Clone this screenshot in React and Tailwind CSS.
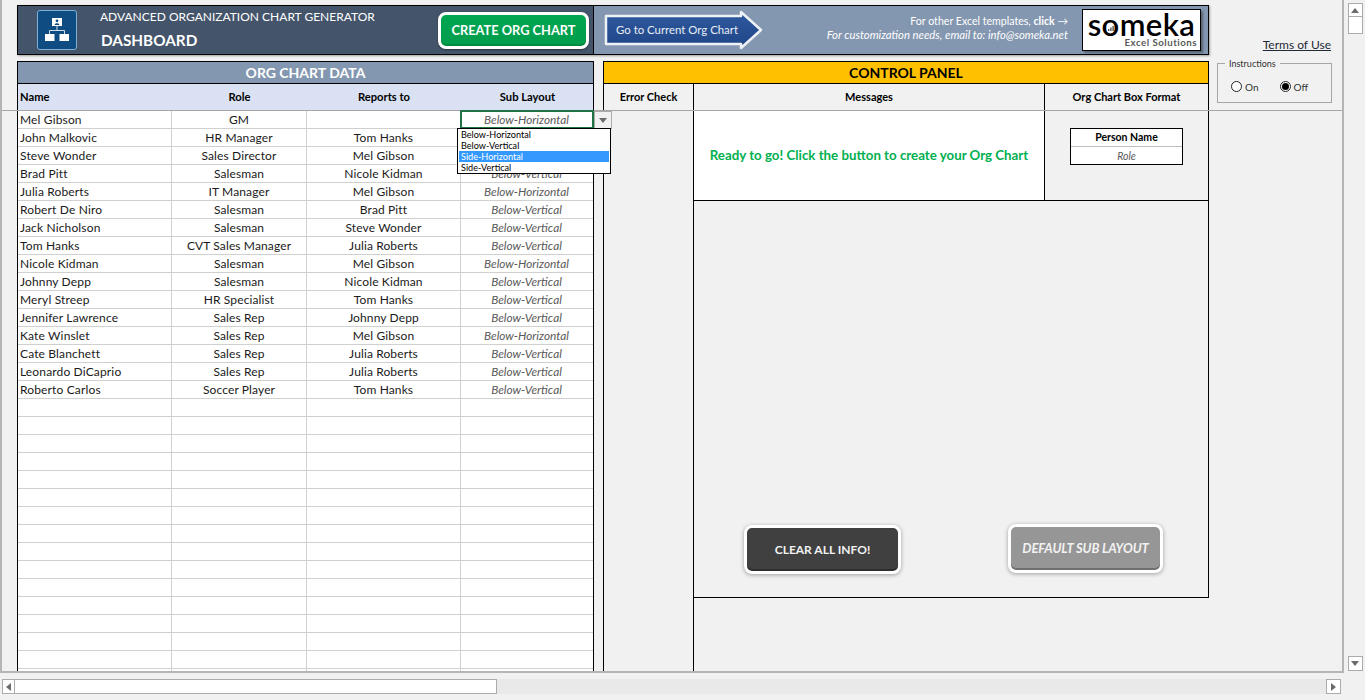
const rows = [
  ["Mel Gibson", "GM", "", "Below-Horizontal"],
  ["John Malkovic", "HR Manager", "Tom Hanks", "Below-Vertical"],
  ["Steve Wonder", "Sales Director", "Mel Gibson", "Below-Vertical"],
  ["Brad Pitt", "Salesman", "Nicole Kidman", "Below-Vertical"],
  ["Julia Roberts", "IT Manager", "Mel Gibson", "Below-Horizontal"],
  ["Robert De Niro", "Salesman", "Brad Pitt", "Below-Vertical"],
  ["Jack Nicholson", "Salesman", "Steve Wonder", "Below-Vertical"],
  ["Tom Hanks", "CVT Sales Manager", "Julia Roberts", "Below-Vertical"],
  ["Nicole Kidman", "Salesman", "Mel Gibson", "Below-Horizontal"],
  ["Johnny Depp", "Salesman", "Nicole Kidman", "Below-Vertical"],
  ["Meryl Streep", "HR Specialist", "Tom Hanks", "Below-Vertical"],
  ["Jennifer Lawrence", "Sales Rep", "Johnny Depp", "Below-Vertical"],
  ["Kate Winslet", "Sales Rep", "Mel Gibson", "Below-Horizontal"],
  ["Cate Blanchett", "Sales Rep", "Julia Roberts", "Below-Vertical"],
  ["Leonardo DiCaprio", "Sales Rep", "Julia Roberts", "Below-Vertical"],
  ["Roberto Carlos", "Soccer Player", "Tom Hanks", "Below-Vertical"],
  ...Array.from({ length: 16 }, () => ["", "", "", ""]),
];

const cols = "grid grid-cols-[154px_135px_154px_133px]";

function Tri({ dir }) {
  const pts = { up: "0,5 4,0 8,5", down: "0,0 8,0 4,5", left: "5,0 5,8 0,4", right: "0,0 0,8 5,4" }[dir];
  const box = dir === "up" || dir === "down" ? "0 0 8 5" : "0 0 5 8";
  const size = dir === "up" || dir === "down" ? "w-2 h-[5px]" : "w-[5px] h-2";
  return (
    <svg viewBox={box} className={size}>
      <polygon points={pts} fill="#6b6b6b" />
    </svg>
  );
}

function ScrollBtn({ dir, className }) {
  return (
    <div className={"flex items-center justify-center bg-white border border-[#ababab] " + className}>
      <Tri dir={dir} />
    </div>
  );
}

function Radio({ checked, label }) {
  return (
    <div className="flex items-center gap-[3px]">
      <span className="flex items-center justify-center w-[11px] h-[11px] rounded-full border border-[#222] bg-white">
        {checked && <span className="w-[7px] h-[7px] rounded-full bg-black" />}
      </span>
      <span className="text-[10px] leading-none text-[#333]">{label}</span>
    </div>
  );
}

function OrgIcon() {
  return (
    <div className="flex items-center justify-center w-10 h-10 ml-[19px] rounded-[3px] bg-[#0f4c81] border border-[#7fb0d6]">
      <svg viewBox="0 0 30 30" className="w-[30px] h-[30px]">
        <rect x="10" y="3" width="10" height="8" fill="#fff" />
        <circle cx="15" cy="5.8" r="1.4" fill="#0f4c81" />
        <path d="M12.6 10 C12.6 7.8 17.4 7.8 17.4 10 Z" fill="#0f4c81" />
        <path d="M15 11 V15.5 M7.5 19 V15.5 H22.5 V19" stroke="#fff" strokeWidth="0.8" fill="none" />
        <rect x="3" y="19" width="9.5" height="7" fill="#fff" />
        <rect x="17.5" y="19" width="9.5" height="7" fill="#fff" />
      </svg>
    </div>
  );
}

function Logo() {
  return (
    <div className="relative flex flex-col items-center w-[119px] h-[42px] ml-[14px] bg-white border border-black shadow-[2px_2px_2px_rgba(0,0,0,0.35)]">
      <span className="font-semibold text-[31px] leading-[24px] mt-[2px] text-black tracking-[0.4px]">someka</span>
      <span className="self-end mr-[3px] font-bold text-[9.7px] leading-3 text-[#595959] tracking-[0.5px]">Excel Solutions</span>
      <svg viewBox="0 0 6 6" className="absolute left-[25px] top-[15px] w-[6px] h-[6px]">
        <rect x="0" y="4" width="1.4" height="2" fill="#555" />
        <rect x="2.2" y="2.5" width="1.4" height="3.5" fill="#555" />
        <rect x="4.4" y="1" width="1.4" height="5" fill="#555" />
      </svg>
    </div>
  );
}

function Header() {
  return (
    <div className="flex h-[50px] w-[1192px] border border-black shadow-[1px_1px_2px_rgba(0,0,0,0.35)]">
      <div className="flex items-center w-[576px] shrink-0 bg-[#44546a] border-r border-black">
        <OrgIcon />
        <div className="flex flex-col ml-[23px] w-[338px] text-white">
          <span className="text-[12px] leading-4 mb-[5px] -mt-[2px]">ADVANCED ORGANIZATION CHART GENERATOR</span>
          <span className="text-[15.3px] leading-5 font-bold ml-[1px]">DASHBOARD</span>
        </div>
        <div className="flex items-center justify-center w-[151px] h-[37px] pt-[1px] rounded-[8px] border-[3px] border-white bg-gradient-to-b from-[#00a651] to-[#009d4c] text-[12.8px] font-bold text-white shadow-[0_1px_2px_rgba(0,0,0,0.4),inset_0_-2px_0_#008a3e]">
          CREATE ORG CHART
        </div>
      </div>
      <div className="flex items-center flex-1 bg-[#8497b0]">
        <div className="relative w-[160px] h-10 ml-[10px] shrink-0 flex items-center">
          <svg viewBox="0 0 160 40" className="absolute inset-0 w-[160px] h-10">
            <defs>
              <linearGradient id="arrowFill" x1="0" y1="0" x2="0" y2="1">
                <stop offset="0" stopColor="#2f5aa0" />
                <stop offset="1" stopColor="#1f4586" />
              </linearGradient>
            </defs>
            <polygon
              points="2,6 137,6 137,2 157,20 137,38 137,34 2,34"
              fill="url(#arrowFill)"
              stroke="#eef1f6"
              strokeWidth="2.5"
              strokeLinejoin="round"
            />
          </svg>
          <span className="relative ml-[12px] text-[11.4px] text-[#e8edf5] whitespace-nowrap">Go to Current Org Chart</span>
        </div>
        <div className="flex flex-col items-end w-[303px] ml-[1px] text-white leading-[14px] pb-[4px]">
          <span className="text-[10.6px]">
            For other Excel templates, <b>click</b> →
          </span>
          <span className="italic text-[11.3px]">For customization needs, email to: info@someka.net</span>
        </div>
        <Logo />
      </div>
    </div>
  );
}

function TopPane() {
  return (
    <div className="flex h-[111px] shrink-0 pl-[15px] pt-[5px] border-b border-[#a6a6a6]">
      <div className="flex flex-col w-[1192px]">
        <Header />
        <div className="flex mt-[6px] h-[49px] font-bold text-[11.2px]">
          <div className="flex flex-col w-[577px] border-x border-t border-black">
            <div className="flex items-center justify-center h-[22px] bg-[#8497b0] border-b border-black text-white text-[14px]">
              ORG CHART DATA
            </div>
            <div className={cols + " flex-1 bg-[#d9e1f2] items-center text-center"}>
              <span className="text-left pl-[2px]">Name</span>
              <span>Role</span>
              <span>Reports to</span>
              <span>Sub Layout</span>
            </div>
          </div>
          <div className="flex flex-col w-[606px] ml-[9px] border-x border-t border-black">
            <div className="flex items-center justify-center h-[22px] bg-[#ffc000] border-b border-black text-black text-[14px]">
              CONTROL PANEL
            </div>
            <div className="grid grid-cols-[90px_351px_1fr] flex-1 items-stretch text-center text-[11px]">
              <span className="flex items-center justify-center border-r border-black">Error Check</span>
              <span className="flex items-center justify-center border-r border-black">Messages</span>
              <span className="flex items-center justify-center">Org Chart Box Format</span>
            </div>
          </div>
        </div>
      </div>
      <div className="flex flex-col items-end w-[115px] ml-[8px] pt-[33px]">
        <span className="text-[12px] leading-[14px] underline text-[#1f2937] mr-[1px]">Terms of Use</span>
        <div className="relative w-[115px] h-[40px] mt-[11px] border border-[#a6a6a6] flex items-center gap-[21px] pl-[13px] pt-[7px]">
          <span className="absolute -top-[6px] left-[7px] px-[4px] bg-[#f1f1f1] text-[9px] leading-3 text-[#333]">Instructions</span>
          <Radio label="On" />
          <Radio checked label="Off" />
        </div>
      </div>
    </div>
  );
}

function Table() {
  return (
    <div className="relative w-[577px] h-full border-x border-black bg-white overflow-visible">
      <div className="h-full overflow-hidden">
        {rows.map((r, i) => (
          <div key={i} className={cols + " h-[18px] border-b border-[#d0d0d0] text-[12px] leading-[17px] text-[#1a1a1a]"}>
            <span className="pl-[2px] border-r border-[#d0d0d0] whitespace-nowrap tracking-[0.15px]">{r[0]}</span>
            <span className="text-center border-r border-[#d0d0d0] whitespace-nowrap tracking-[0.12px]">{r[1]}</span>
            <span className="text-center border-r border-[#d0d0d0] whitespace-nowrap tracking-[0.12px]">{r[2]}</span>
            <span className="text-center pr-[2px] italic text-[11.8px] text-[#595959] whitespace-nowrap">{r[3]}</span>
          </div>
        ))}
      </div>
      <div className="absolute left-[442px] -top-[1px] w-[134px] h-[19px] border-2 border-[#217346]" />
      <div className="absolute left-[576px] top-0 w-[18px] h-[18px] flex items-center justify-center bg-[#f1f1f1] border border-[#ababab]">
        <Tri dir="down" />
      </div>
      <div className="absolute left-[439px] top-[17px] w-[154px] h-[46px] bg-white border border-black px-[1px] text-[9.1px] leading-[11px] text-black">
        <div className="pl-[2px]">Below-Horizontal</div>
        <div className="pl-[2px]">Below-Vertical</div>
        <div className="pl-[2px] bg-[#3399ff] text-white">Side-Horizontal</div>
        <div className="pl-[2px]">Side-Vertical</div>
      </div>
    </div>
  );
}

function Panel() {
  return (
    <div className="flex w-[606px] h-full ml-[9px] border-l border-black">
      <div className="w-[90px] h-full border-r border-black" />
      <div className="flex flex-col w-[515px]">
        <div className="flex h-[90px] border-b border-black border-r">
          <div className="flex items-center justify-center w-[351px] bg-white border-r border-black text-[13.3px] font-bold text-[#00b050]">
            Ready to go! Click the button to create your Org Chart
          </div>
          <div className="flex items-start justify-center flex-1 pt-[17px]">
            <div className="flex flex-col w-[113px] h-[37px] bg-white border border-black text-center">
              <span className="h-[18px] border-b border-[#bfbfbf] font-bold text-[10.5px] leading-[17px]">Person Name</span>
              <span className="italic text-[10.5px] leading-[18px] text-[#595959]">Role</span>
            </div>
          </div>
        </div>
        <div className="flex items-start h-[397px] border-b border-r border-black pt-[324px] pl-[50px]">
          <div className="flex items-center justify-center w-[157px] h-[49px] pt-[1px] rounded-[8px] border-[3px] border-white bg-[#404040] text-[12px] font-bold text-[#f2f2f2] shadow-[0_1px_4px_rgba(0,0,0,0.35),inset_0_-2px_0_#2f2f2f]">
            CLEAR ALL INFO!
          </div>
          <div className="flex items-center justify-center w-[155px] h-[49px] pt-[1px] ml-[107px] -mt-[1px] rounded-[8px] border-[3px] border-white bg-[#969696] text-[13px] font-bold italic text-[#f2f2f2] tracking-[-0.1px] shadow-[0_1px_4px_rgba(0,0,0,0.35),inset_0_-2px_0_#6f6f6f]">
            DEFAULT SUB LAYOUT
          </div>
        </div>
      </div>
    </div>
  );
}

export default function App() {
  return (
    <div className="flex flex-col w-[1365px] h-[700px] overflow-hidden bg-[#f1f1f1] text-black font-['Lato','Liberation_Sans',sans-serif]">
      <div className="flex h-[673px] shrink-0">
        <div className="flex flex-col w-[1344px] border-l-2 border-r-2 border-b-2 border-[#b5b5b5]">
          <TopPane />
          <div className="flex flex-1 min-h-0 pl-[15px]">
            <Table />
            <Panel />
          </div>
        </div>
        <div className="flex flex-col items-center flex-1 pt-[3px] pb-[2px] pl-[1px]">
          <ScrollBtn dir="up" className="w-[15px] h-[14px]" />
          <div className="w-[15px] h-[18px] bg-white border border-[#ababab] -mt-px" />
          <div className="flex-1" />
          <ScrollBtn dir="down" className="w-[15px] h-[15px]" />
        </div>
      </div>
      <div className="flex h-[15px] mt-[6px] ml-[2px] w-[1339px]">
        <ScrollBtn dir="left" className="w-[13px] h-[15px]" />
        <div className="w-[483px] h-[15px] bg-white border border-[#ababab] -ml-px" />
        <div className="flex-1 h-[15px] bg-[#e9e9e9]" />
        <ScrollBtn dir="right" className="w-[15px] h-[15px]" />
      </div>
    </div>
  );
}
